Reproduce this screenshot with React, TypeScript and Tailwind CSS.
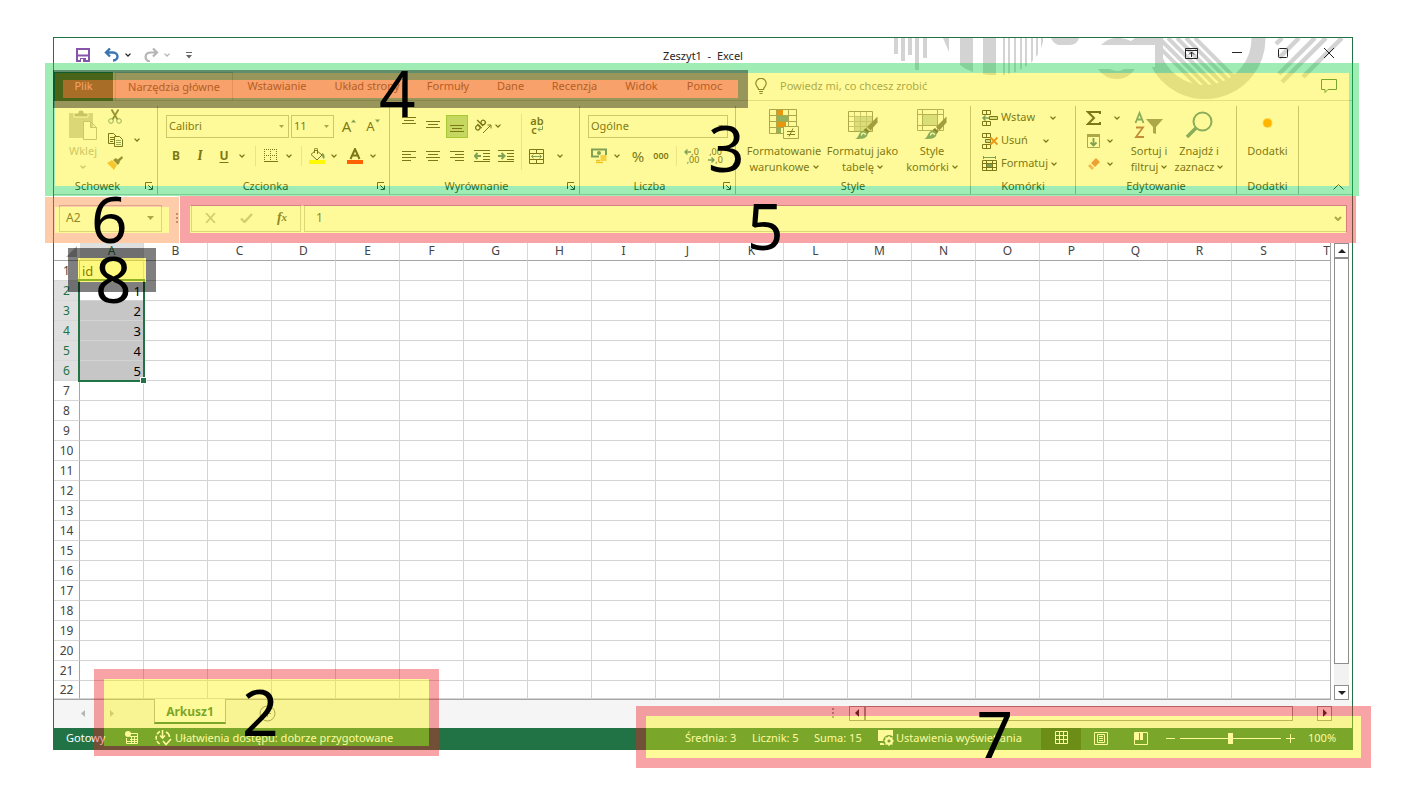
import type { ReactNode } from "react";

const COLUMNS = "ABCDEFGHIJKLMNOPQRST".split("");
const ROWS = Array.from({ length: 22 }, (_, i) => i + 1);
const VALUES: Record<number, string> = { 1: "id", 2: "1", 3: "2", 4: "3", 5: "4", 6: "5" };

function Chevron({ className = "" }: { className?: string }) {
  return (
    <svg viewBox="0 0 6 4" className={"h-[4px] w-[6px] shrink-0 " + className} fill="none" stroke="currentColor" strokeWidth="1.3">
      <path d="M.5.6 3 3 5.500.6" />
    </svg>
  );
}

function Icon({ w = 16, h = 16, children }: { w?: number; h?: number; children: ReactNode }) {
  return (
    <svg width={w} height={h} viewBox={`0 0 ${w} ${h}`} fill="none" stroke="currentColor" className="shrink-0" aria-hidden="true">
      {children}
    </svg>
  );
}

function Btn({ label, className = "", children }: { label: string; className?: string; children: ReactNode }) {
  return (
    <button type="button" aria-label={label} className={"flex shrink-0 items-center justify-center " + className}>
      {children}
    </button>
  );
}

function Group({ name, className, launcher, children }: { name: string; className: string; launcher?: boolean; children: ReactNode }) {
  return (
    <section aria-label={name} className={"flex shrink-0 flex-col border-r border-[#a8a8a8] " + className}>
      <div className="h-[72px]">{children}</div>
      <div className="flex h-[16px] items-center">
        <span className="grow text-center">{name}</span>
        {launcher && (
          <span className="flex w-[16px] shrink-0 justify-center">
            <button type="button" aria-label={name + " – więcej"}>
              <Icon w={8} h={8}>
                <path d="M7 .5H.5V7M3 3l4 4M7.500 3.500v4h-4" />
              </Icon>
            </button>
          </span>
        )}
      </div>
    </section>
  );
}

function Lines({ widths, y = 2, center = false }: { widths: number[]; y?: number; center?: boolean }) {
  return (
    <Icon w={14} h={14}>
      {widths.map((w, i) => {
        const x = center ? (14 - w) / 2 : 0;
        return <path key={i} d={`M${x} ${y + i * 3 + 0.5}h${w}`} />;
      })}
    </Icon>
  );
}

function Indent({ right = false }: { right?: boolean }) {
  return (
    <Icon w={16} h={14}>
      <path d="M0 1.500h16M9 4.500h7M9 7.500h7M0 12.500h16M9 10.500h7" />
      {right ? (
        <path d="M0 7h6M3.500 4 6.500 7l-3 3" stroke="#2b6a8c" strokeWidth="2" />
      ) : (
        <path d="M7 7H1M3.500 4 .8 7l2.700 3" stroke="#2b6a8c" strokeWidth="2" />
      )}
    </Icon>
  );
}

function BigButton({ icon, top, bottom, className }: { icon: ReactNode; top: string; bottom?: string; className: string }) {
  return (
    <button type="button" className={"flex shrink-0 flex-col items-center whitespace-nowrap " + className}>
      <span className="flex h-[37px] items-center justify-center">{icon}</span>
      <span className="leading-[16px]">{top}</span>
      {bottom && (
        <span className="flex items-center gap-[3px] leading-[16px]">
          {bottom}
          <Chevron />
        </span>
      )}
    </button>
  );
}

function Brush() {
  return (
    <g stroke="none">
      <path d="M29.500 7.500v6l-7 8-3.500-3.500z" fill="#666" />
      <path d="M18 19l3.500 3.500-2 2.500-4-4z" fill="#444" />
      <path d="M7 30c4-1 3-6 7-8 4-1 7 2 5 5-2 3-6 3-12 3z" fill="#3f8093" />
      <path d="M13.500 26.500c0-3 3.500-3 4-.5" fill="none" stroke="#fff" strokeWidth="1.300" />
    </g>
  );
}

function TitlePattern() {
  return (
    <svg viewBox="890 38 462 62" className="pointer-events-none absolute top-0 right-0 h-[62px] w-[462px]" aria-hidden="true">
      <defs>
        <clipPath id="disc"><circle cx="1205" cy="38" r="49" /></clipPath>
        <clipPath id="half"><path d="M1000 38h44l-4 14-10 12-14 8-16 4z" /></clipPath>
      </defs>
      <g fill="#d3d3d3">
        <path d="M894 38h4v16h-4zM901 38h4v23h-4zM908 38h4v17h-4zM915 38h4v32h-4zM923 38h4v20h-4z" />
        <path d="M943 38h6v14zM960 38h13v34q-7-2-13-7zM983 38h13v37h-7l-6-1z" />
        <g clipPath="url(#half)">
          <path d="M1003 38h2v40h-2zM1008 38h2v40h-2zM1014 38h2v40h-2zM1020 38h2v40h-2zM1025 38h2v40h-2zM1031 38h2v40h-2zM1036 38h2v40h-2zM1041 38h2v40h-2z" />
        </g>
        <path d="M1051 38h28q-2 7-9 7h-12q-5-2-7-7zM1041 38h2v5zM1101 45q12-12 30-4l4-3h20v7zM1098 69h12q8 4 14 0h11q-7 10-18 10-12 0-19-10z" />
      </g>
      <path d="M1258.500 38A53.500 53.500 0 0 1 1156 60V38" fill="none" stroke="#d3d3d3" strokeWidth="14" />
      <path d="M1135 45h20v22h-11V45z" fill="#fff" />
      <g stroke="#d3d3d3" strokeWidth="4" clipPath="url(#disc)">
        <path d="M1150 38l55 55M1159 38l55 55M1168 38l55 55M1177 38l55 55M1186 38l55 55M1195 38l55 55" />
      </g>
      <path d="M1276 44l6-6M1279 58l20-20M1279 74l36-36M1282 82l44-44M1303 77l39-39" stroke="#d3d3d3" strokeWidth="4.500" />
    </svg>
  );
}

function TitleBar() {
  return (
    <header className="relative flex h-[34px] items-center text-[#262626]">
      <TitlePattern />
      <div className="flex w-0 grow items-center">
        <Btn label="Zapisz" className="ml-[22px] w-[14px]">
          <Icon w={14} h={14}>
            <path d="M1 1h12v12H1z" stroke="#8654a8" strokeWidth="2" />
            <path d="M1 7.500h12" stroke="#8654a8" strokeWidth="2" />
            <path d="M4 10h6v4H4z" fill="#8654a8" stroke="none" />
            <path d="M5 11h2v3H5z" fill="#fff" stroke="none" />
          </Icon>
        </Btn>
        <Btn label="Cofnij" className="ml-[14px] w-[16px]">
          <Icon w={16} h={14}>
            <path d="M6 .5 2 4.500l4 4M2 4.500h7c6 0 6 8 0 8" stroke="#3a76b4" strokeWidth="2.400" />
          </Icon>
        </Btn>
        <Chevron className="ml-[5px]" />
        <Btn label="Ponów" className="ml-[12px] w-[16px] text-[#b5b5b5]">
          <Icon w={16} h={14}>
            <path d="m10 .5 4 4-4 4M14 4.500H8c-7 0-7 8-1 9" strokeWidth="2.200" />
          </Icon>
        </Btn>
        <Chevron className="ml-[5px] text-[#b5b5b5]" />
        <Btn label="Dostosuj pasek" className="ml-[16px] w-[6px] text-[#666]">
          <Icon w={6} h={7}>
            <path d="M0 .5h6" />
            <path d="M0 3h6L3 6.500z" fill="currentColor" stroke="none" />
          </Icon>
        </Btn>
      </div>
      <h1 className="pt-[2px] whitespace-pre">Zeszyt1  -  Excel</h1>
      <div className="relative flex w-0 grow items-center justify-end pb-[4px]">
        <Btn label="Opcje wstążki" className="w-[46px]">
          <Icon w={13} h={11}>
            <path d="M.5.5h12v10H.5zM.5 2.500h12M6.500 9V4M4 6.500 6.500 4 9 6.500" />
          </Icon>
        </Btn>
        <Btn label="Minimalizuj" className="w-[46px]">
          <Icon w={10} h={10}><path d="M0 4.500h10" /></Icon>
        </Btn>
        <Btn label="Maksymalizuj" className="w-[46px]">
          <Icon w={10} h={10}><rect x=".5" y=".5" width="9" height="9" rx="1" /></Icon>
        </Btn>
        <Btn label="Zamknij" className="w-[46px]">
          <Icon w={10} h={10}><path d="m0 0 10 10M10 0 0 10" /></Icon>
        </Btn>
      </div>
    </header>
  );
}

function Tabs() {
  const tab = "flex shrink-0 items-center justify-center whitespace-nowrap ";
  return (
    <nav className="relative flex h-[29px] border-b border-[#d2d2d2] text-[#444]">
      <button type="button" className={tab + "-mb-px w-[59px] bg-[#217346] text-white"}>Plik</button>
      <button type="button" className={tab + "-mb-px ml-[2px] w-[118px] border-x border-t border-[#d2d2d2]"}>Narzędzia główne</button>
      <button type="button" className={tab + "w-[88px]"}>Wstawianie</button>
      <button type="button" className={tab + "w-[92px]"}>Układ strony</button>
      <button type="button" className={tab + "w-[70px]"}>Formuły</button>
      <button type="button" className={tab + "w-[55px]"}>Dane</button>
      <button type="button" className={tab + "w-[73px]"}>Recenzja</button>
      <button type="button" className={tab + "w-[61px]"}>Widok</button>
      <button type="button" className={tab + "w-[65px]"}>Pomoc</button>
      <label className="ml-[18px] flex grow items-center gap-[13px]">
        <Icon w={12} h={16}>
          <path d="M3.500 11.500C3.500 9 .8 8.500.8 5.500a5.200 5.200 0 0 1 10.400 0c0 3-2.700 3.500-2.700 6zM4 13.500h4M4.500 15.500h3" strokeWidth="1.200" />
        </Icon>
        <input aria-label="Powiedz mi, co chcesz zrobić" placeholder="Powiedz mi, co chcesz zrobić" className="w-[240px] bg-transparent outline-none placeholder:text-[#777]" />
      </label>
      <Btn label="Komentarze" className="mr-[15px]">
        <Icon w={16} h={14}><path d="M.5.5h15v10H7l-3 3v-3H.5z" stroke="#217346" /></Icon>
      </Btn>
    </nav>
  );
}

function Clipboard() {
  return (
    <Group name="Schowek" launcher className="w-[104px]">
      <div className="flex">
        <button type="button" className="ml-[14px] flex w-[30px] flex-col items-center text-[#aaa]">
          <span className="flex h-[37px] items-center">
            <Icon w={28} h={30}>
              <path d="M0 3h24v25H0z" fill="#c4c4c4" stroke="none" />
              <path d="M5 7V3h4c0-4 6-4 6 0h4v4z" fill="#a5a5a5" stroke="#fff" />
              <path d="M14.500 11.500h7l6 6v12h-13zM21.500 11.500v6h6" fill="#fff" stroke="#aaa" />
            </Icon>
          </span>
          <span className="leading-[16px]">Wklej</span>
          <Chevron className="mt-[6px]" />
        </button>
        <div className="ml-[9px] flex w-[16px] flex-col items-center">
          <Btn label="Wytnij" className="h-[22px]">
            <Icon w={16} h={16}>
              <path d="m4.500.5 6 10M11.500.5l-6 10" stroke="#555" strokeWidth="1.800" />
              <circle cx="4" cy="12" r="2.300" stroke="#4b8393" /><circle cx="12" cy="12" r="2.300" stroke="#4b8393" />
            </Icon>
          </Btn>
          <Btn label="Kopiuj" className="h-[23px]">
            <Icon w={15} h={14}>
              <path d="M.5.5h5l3 3v7h-8zM2 4.500h4M2 6.500h4M2 8.500h3" />
              <path d="M6.500 3.500h5l3 3v7h-8z" fill="#fff" /><path d="M8 7.500h5M8 9.500h5M8 11.500h5" stroke="#4b8393" />
            </Icon>
          </Btn>
          <Btn label="Malarz formatów" className="h-[23px]">
            <Icon w={16} h={14}>
              <path d="M0 7l5-3 5 5-3 5z" fill="#f0a850" stroke="none" />
              <path d="m6 4 3-2 4 4-2 3zM10 4l5-4 1 2-4 4z" fill="#555" stroke="none" />
            </Icon>
          </Btn>
        </div>
        <Btn label="Opcje kopiowania" className="ml-[11px] h-[67px] w-[6px]"><Chevron /></Btn>
      </div>
    </Group>
  );
}

function Picker({ label, value, className }: { label: string; value: string; className: string }) {
  return (
    <span className={"relative flex h-[23px] shrink-0 items-center border border-[#ababab] " + className}>
      <select aria-label={label} className="w-full appearance-none bg-transparent pl-[2px] outline-none">
        <option>{value}</option>
      </select>
      <svg viewBox="0 0 5 3" className="pointer-events-none absolute right-[4px] h-[3px] w-[5px]"><path d="M0 0h5L2.500 3z" fill="#777" /></svg>
    </span>
  );
}

function FontGroup() {
  return (
    <Group name="Czcionka" launcher className="w-[232px]">
      <div className="flex h-[37px] items-center pt-[3px] pl-[8px]">
        <Picker label="Czcionka" value="Calibri" className="w-[123px]" />
        <Picker label="Rozmiar" value="11" className="ml-[2px] w-[43px]" />
        <Btn label="Zwiększ" className="ml-[7px] w-[16px]">
          <span className="text-[15px]">A</span>
          <Icon w={5} h={14}><path d="M0 3.500h5L2.500.5z" fill="#2b6a8c" stroke="none" /></Icon>
        </Btn>
        <Btn label="Zmniejsz" className="ml-[8px] w-[16px]">
          <span className="pt-[2px] text-[13px]">A</span>
          <Icon w={5} h={14}><path d="M0 .5h5L2.500 3.500z" fill="#2b6a8c" stroke="none" /></Icon>
        </Btn>
      </div>
      <div className="flex h-[26px] items-center pl-[8px]">
        <Btn label="Pogrubienie" className="w-[20px] text-xs font-bold">B</Btn>
        <Btn label="Kursywa" className="ml-[4px] w-[20px] font-serif text-sm font-semibold italic">I</Btn>
        <Btn label="Podkreślenie" className="ml-[4px] w-[20px] text-xs font-bold underline underline-offset-2">U</Btn>
        <Chevron className="ml-[5px]" />
        <span className="ml-[10px] h-[20px] w-px bg-[#dcdcdc]" />
        <Btn label="Obramowanie" className="ml-[8px] w-[14px]">
          <Icon w={14} h={14}>
            <path d="M0 .5h14M0 6.500h14M.5 0v13M6.500 0v13M12.500 0v13" strokeDasharray="1 1" /><path d="M0 12.500h14" />
          </Icon>
        </Btn>
        <Chevron className="ml-[8px]" />
        <span className="ml-[9px] h-[20px] w-px bg-[#dcdcdc]" />
        <Btn label="Kolor wypełnienia" className="ml-[7px] w-[16px]">
          <Icon w={16} h={16}>
            <path d="m2 6.500 5-4.500 6 5-5 5zM5.500 5V1.500a1.500 1.500 0 0 1 3 0V6" />
            <path d="M13 5c3 1 3 4 2 6-2-1-2-3-2-6z" fill="#2b6a8c" stroke="none" />
            <path d="M0 12h16v4H0z" fill="#ff0" stroke="none" />
          </Icon>
        </Btn>
        <Chevron className="ml-[6px]" />
        <Btn label="Kolor czcionki" className="ml-[10px] w-[16px]">
          <Icon w={16} h={16}>
            <path d="M3.500 11 8 1l4.500 10M5 7.500h6" strokeWidth="2" />
            <path d="M0 12h16v4H0z" fill="#ff0000" stroke="none" />
          </Icon>
        </Btn>
        <Chevron className="ml-[7px]" />
      </div>
    </Group>
  );
}

function AlignGroup() {
  return (
    <Group name="Wyrównanie" launcher className="w-[190px]">
      <div className="flex">
        <div className="w-[131px] pl-[8px]">
          <div className="flex h-[37px] items-center gap-[2px] pt-[3px]">
            <Btn label="Do góry" className="h-[22px] w-[22px] pb-[8px]"><Lines widths={[14, 10, 14]} center /></Btn>
            <Btn label="Do środka" className="h-[22px] w-[22px] pb-[2px]"><Lines widths={[14, 10, 14]} y={3} center /></Btn>
            <Btn label="Do dołu" className="h-[23px] w-[22px] border border-[#6dae58] bg-[#9fc49f] pt-[6px]"><Lines widths={[14, 10, 14]} y={3} center /></Btn>
            <Btn label="Orientacja" className="ml-[4px] w-[18px]">
              <Icon w={17} h={16}>
                <g transform="rotate(-45 6 8)" strokeWidth="1.300">
                  <circle cx="2.500" cy="7" r="2.200" /><path d="M5 4v6M7.500 1v8.500" /><circle cx="10" cy="7" r="2.200" />
                </g>
                <path d="M8 15l8-8M12.500 7H16v3.500" />
              </Icon>
            </Btn>
            <Chevron className="ml-[1px]" />
          </div>
          <div className="flex h-[26px] items-center gap-[2px]">
            <Btn label="Do lewej" className="h-[22px] w-[22px]"><Lines widths={[14, 9, 14, 9]} /></Btn>
            <Btn label="Wyśrodkuj" className="h-[22px] w-[22px]"><Lines widths={[14, 10, 14, 10]} center /></Btn>
            <Btn label="Do prawej" className="h-[22px] w-[22px]"><span className="-scale-x-100"><Lines widths={[14, 9, 14, 9]} /></span></Btn>
            <Btn label="Zmniejsz wcięcie" className="ml-[1px] h-[22px] w-[22px]"><Indent /></Btn>
            <Btn label="Zwiększ wcięcie" className="h-[22px] w-[22px]"><Indent right /></Btn>
          </div>
        </div>
        <div className="my-[8px] h-[56px] w-px bg-[#dcdcdc]" />
        <div className="pl-[7px]">
          <Btn label="Zawijaj tekst" className="h-[37px] w-[16px] flex-col text-[11px] leading-[9px] font-semibold">
            <span>ab</span>
            <span className="flex items-center">
              c
              <Icon w={6} h={6}><path d="M5.500 0v3.500H1M3 1.500l-2 2 2 2" stroke="#2b6a8c" /></Icon>
            </span>
          </Btn>
          <div className="flex h-[26px] items-center">
            <Btn label="Scal i wyśrodkuj" className="w-[15px]">
              <Icon w={15} h={15}>
                <path d="M.5.5h14v14H.5zM.5 4.500h14M.5 10.500h14M7.500.5v4M7.500 10.500v4" />
                <path d="M2.500 7.500h10M4.500 5.500l-2 2 2 2M10.500 5.500l2 2-2 2" stroke="#2b6a8c" />
              </Icon>
            </Btn>
            <Chevron className="ml-[13px]" />
          </div>
        </div>
      </div>
    </Group>
  );
}

function NumberGroup() {
  return (
    <Group name="Liczba" launcher className="w-[156px]">
      <div className="flex h-[37px] items-center pt-[3px] pl-[8px]">
        <Picker label="Format liczb" value="Ogólne" className="w-[140px]" />
      </div>
      <div className="flex h-[26px] items-center pl-[11px]">
        <Btn label="Format walutowy" className="w-[16px]">
          <Icon w={16} h={16}>
            <path d="M1 1.500h14v7H1z" stroke="#2b6a8c" strokeWidth="2" /><circle cx="8" cy="5" r="2" fill="#2b6a8c" stroke="none" />
            <path d="M8 7h8v9H5v-5h3z" fill="#fff" stroke="none" />
            <path d="M9.500 8h6M9.500 10h6M9.500 12h6M5 12.500h4M5 14.500h7" stroke="#e9a23b" strokeWidth="1.500" />
          </Icon>
        </Btn>
        <Chevron className="ml-[7px]" />
        <Btn label="Procent" className="ml-[9px] w-[18px] text-[15px]">%</Btn>
        <Btn label="Zapis dziesiętny" className="ml-[4px] w-[20px] text-[9px] font-semibold">000</Btn>
        <span className="ml-[5px] h-[20px] w-px bg-[#dcdcdc]" />
        <Btn label="Więcej miejsc" className="ml-[6px] w-[17px] flex-col text-[9px] leading-[8px]">
          <span className="flex items-center">
            <Icon w={7} h={6}><path d="M7 3H1M3.500.5 1 3l2.500 2.500" stroke="#2b6a8c" strokeWidth="1.400" /></Icon>,0
          </span>
          <span className="pl-[3px]">,00</span>
        </Btn>
        <Btn label="Mniej miejsc" className="ml-[7px] w-[17px] flex-col text-[9px] leading-[8px]">
          <span>,00</span>
          <span className="flex items-center">
            <Icon w={7} h={6}><path d="M0 3h6M3.500.5 6 3 3.500 5.500" stroke="#2b6a8c" strokeWidth="1.400" /></Icon>,0
          </span>
        </Btn>
      </div>
    </Group>
  );
}

function StylesGroup() {
  return (
    <Group name="Style" className="w-[235px]">
      <div className="flex pl-[9px]">
        <BigButton
          className="w-[78px]"
          top="Formatowanie"
          bottom="warunkowe"
          icon={
            <Icon w={30} h={31}>
              <path d="M.5.5h27v24H.5zM.5 6.500h27M.5 12.500h27M.5 18.500h27M7.500.5v24M19.500.5v24" stroke="#777" />
              <path d="M8 1h6v5H8zM8 13h9v5H8z" fill="#d65a16" stroke="none" /><path d="M8 7h11v5H8zM8 19h4v5H8z" fill="#47869a" stroke="none" />
              <path d="M14.500 17.500h15v12h-15z" fill="#fff" stroke="#777" />
              <path d="M18 22.500h8M18 25.500h8M24 19.500l-4 8" stroke="#333" />
            </Icon>
          }
        />
        <BigButton
          className="w-[79px]"
          top="Formatuj jako"
          bottom="tabelę"
          icon={
            <Icon w={30} h={31}>
              <path d="M7 8h17v14H7z" fill="#c2d0c5" stroke="none" />
              <path d="M.5 7.500h24M.5 12.500h24M.5 17.500h24M6.500 2.500v20M12.500 2.500v20M18.500 2.500v20" stroke="#aaa" />
              <path d="M.5 2.500h24v20H.5z" stroke="#777" />
              <Brush />
            </Icon>
          }
        />
        <BigButton
          className="w-[60px]"
          top="Style"
          bottom="komórki"
          icon={
            <Icon w={30} h={31}>
              <path d="M.5.5h26v21H.5zM.5 5.500h26M.5 16.500h26M5.500.5v21M20.500.5v21" stroke="#888" />
              <path d="M6 6h14v10H6z" fill="#c2d0c5" stroke="none" />
              <Brush />
            </Icon>
          }
        />
      </div>
    </Group>
  );
}

function CellsGroup() {
  const row = "flex h-[23px] items-center gap-[3px]";
  return (
    <Group name="Komórki" className="w-[105px]">
      <div className="pl-[11px]">
        <button type="button" className={row}>
          <Icon w={16} h={16}>
            <path d="M.5.5h8v4h-8zM4.500.5v4M.5 11.500h8v4h-8zM4.500 11.500v4" />
            <path d="M7.500 6.500h8v3h-8z" fill="#bcd0c8" />
            <path d="M7 8H1M3.500 5.500 1 8l2.500 2.500" stroke="#2b6a8c" strokeWidth="1.500" />
          </Icon>
          Wstaw
          <Chevron className="ml-[12px]" />
        </button>
        <button type="button" className={row}>
          <Icon w={16} h={16}>
            <path d="M.5.5h8v4h-8zM4.500.5v4M.5 11.500h8v4h-8zM4.500 11.500v4" />
            <path d="M3.500 6.500h5v3h-5z" fill="#bcd0c8" />
            <path d="m8.500 4.500 7 7M15.500 4.500l-7 7" stroke="#e0571c" strokeWidth="1.800" />
          </Icon>
          Usuń
          <Chevron className="ml-[12px]" />
        </button>
        <button type="button" className={row}>
          <Icon w={16} h={16}>
            <path d="M.5 4.500h14v10H.5zM.5 7.500h14M.5 11.500h14M4.500 4.500v10M10.500 4.500v10" /><path d="M5 8h5v3H5z" fill="#2b6a8c" stroke="none" />
            <path d="M1 1.500h13M1.500 0v3M13.500 0v3" stroke="#2b6a8c" />
          </Icon>
          Formatuj
          <Chevron />
        </button>
      </div>
    </Group>
  );
}

function EditGroup() {
  return (
    <Group name="Edytowanie" className="w-[161px]">
      <div className="flex">
        <div className="ml-[10px] w-[38px]">
          <Btn label="Suma" className="h-[23px] gap-[12px]">
            <Icon w={16} h={14}><path d="M14 3V1H2l6 6-6 6h12v-2" strokeWidth="2" /></Icon>
            <Chevron />
          </Btn>
          <Btn label="Wypełnij" className="h-[23px] gap-[6px]">
            <Icon w={15} h={16}><path d="M1.500 1.500h12v13h-12z" stroke="#777" /><path d="M1 1h13v3H1z" fill="#777" stroke="none" /><path d="M7.500 5v8M4.500 9.500l3 3 3-3" stroke="#2b6a8c" strokeWidth="1.800" /></Icon>
            <Chevron />
          </Btn>
          <Btn label="Wyczyść" className="h-[23px] gap-[6px]">
            <Icon w={15} h={14}><path d="M5 6 10 1l4 4-5 5z" fill="#e36a55" stroke="none" /><path d="m4 7 4 4-2 2-4-4z" fill="#eb9280" stroke="none" /></Icon>
            <Chevron />
          </Btn>
        </div>
        <BigButton
          className="w-[50px]"
          top="Sortuj i"
          bottom="filtruj"
          icon={
            <Icon w={30} h={28}>
              <path d="M1.500 12 5.500 2l4 10M3 8.500h5" stroke="#3b7e93" strokeWidth="1.800" />
              <path d="M2 16.500h7L2 26h8" stroke="#9d4a5d" strokeWidth="1.800" />
              <path d="M12 8h17l-7 8v7l-3-1v-6z" fill="#777" stroke="none" />
            </Icon>
          }
        />
        <BigButton
          className="w-[50px]"
          top="Znajdź i"
          bottom="zaznacz"
          icon={
            <Icon w={28} h={28}>
              <circle cx="17.500" cy="10.500" r="9" stroke="#3b7e93" strokeWidth="2" /><path d="m11 17-9 9" stroke="#3b7e93" strokeWidth="3.500" />
            </Icon>
          }
        />
      </div>
    </Group>
  );
}

function Ribbon() {
  return (
    <div className="flex h-[94px] border-b border-[#c8c8c8] pt-[5px] text-[#262626]">
      <Clipboard />
      <FontGroup />
      <AlignGroup />
      <NumberGroup />
      <StylesGroup />
      <CellsGroup />
      <EditGroup />
      <Group name="Dodatki" className="w-[62px]">
        <BigButton className="w-full" top="Dodatki" icon={<Icon w={12} h={16}><circle cx="5.500" cy="6" r="5" fill="#ff8a00" fillOpacity=".5" stroke="none" /><circle cx="5.500" cy="6" r="4" fill="#ff8a00" stroke="none" /></Icon>} />
      </Group>
      <div className="flex grow items-end justify-end pr-[8px] pb-[4px]">
        <Btn label="Zwiń wstążkę">
          <Icon w={11} h={6}><path d="M.5 5.500l5-5 5 5" /></Icon>
        </Btn>
      </div>
    </div>
  );
}

function FormulaBar() {
  return (
    <div className="flex h-[48px] items-center pr-[5px] pb-[2px] pl-[5px] text-[#444]">
      <div className="flex h-[27px] w-[103px] shrink-0 items-center border border-[#c4c4c4] pr-[7px]">
        <input aria-label="Pole nazwy" defaultValue="A2" className="w-0 grow bg-transparent pl-[6px] text-xs outline-none" />
        <svg viewBox="0 0 7 4" className="h-[4px] w-[7px]"><path d="M0 0h7L3.500 4z" fill="#777" /></svg>
      </div>
      <div className="flex w-[29px] shrink-0 justify-center">
        <Icon w={2} h={12}><path d="M1 1v2M1 5v2M1 9v2" stroke="#999" strokeWidth="2" /></Icon>
      </div>
      <div className="flex h-[27px] w-[110px] shrink-0 items-center border border-[#c4c4c4]">
        <Btn label="Anuluj" className="w-[36px] text-[#b5b5b5]"><Icon w={11} h={10}><path d="m1 0 9 10M10 0 1 10" strokeWidth="1.800" /></Icon></Btn>
        <Btn label="Wpis" className="w-[36px] text-[#b5b5b5]"><Icon w={13} h={10}><path d="M1 5.500 4.500 9 12 1" strokeWidth="2.400" /></Icon></Btn>
        <Btn label="Wstaw funkcję" className="w-[36px] items-baseline font-['Liberation_Serif',serif] text-sm font-bold italic">f<span className="text-[11px]">x</span></Btn>
      </div>
      <div className="ml-[3px] flex h-[27px] grow items-center border border-[#c4c4c4] pr-[4px]">
        <input aria-label="Pasek formuły" defaultValue="1" className="w-0 grow bg-transparent pl-[11px] text-xs outline-none" />
        <svg viewBox="0 0 8 5" className="h-[5px] w-[8px]"><path d="M1 1l3 3 3-3" fill="none" stroke="#777" strokeWidth="2" /></svg>
      </div>
    </div>
  );
}

function Sheet() {
  return (
    <div className="flex text-xs">
      <div className="w-0 grow">
        <table className="w-full table-fixed border-separate border-spacing-0 border-r border-b border-[#a6a6a6]">
          <colgroup>
            <col className="w-[26px]" />
            {COLUMNS.map((c) => <col key={c} className={c === "T" ? "" : "w-[64px]"} />)}
          </colgroup>
          <thead>
            <tr className="h-[18px]">
              <td className="border-b border-[#a6a6a6] p-0">
                <svg viewBox="0 0 12 12" className="ml-auto mr-[3px] h-[11px] w-[11px]"><path d="M12 0v12H0z" fill="#b5b5b5" /></svg>
              </td>
              {COLUMNS.map((c) => (
                <th
                  key={c}
                  scope="col"
                  className={
                    "border-r border-b border-[#a6a6a6] border-r-[#d8d8d8] p-0 pb-[2px] leading-[14px] font-normal last:border-r-0 last:pr-0 last:text-right " +
                    (c === "A" ? "bg-[#dfdfdf] text-[#217346]" : "text-[#444]")
                  }
                >
                  {c}
                </th>
              ))}
            </tr>
          </thead>
          <tbody>
            {ROWS.map((r) => {
              const picked = r > 1 && r < 7;
              return (
                <tr key={r} className={r === 22 ? "h-[18px]" : "h-[20px]"}>
                  <th
                    scope="row"
                    className={
                      "border-r border-b border-r-[#a6a6a6] border-b-[#d8d8d8] p-0 leading-[17px] font-normal " +
                      (picked ? "bg-[#dfdfdf] text-[#217346]" : "text-[#444]")
                    }
                  >
                    {r}
                  </th>
                  {COLUMNS.map((c) => (
                    <td
                      key={c}
                      className={
                        "relative border-b border-[#d3d3d3] p-0 leading-[18px] " +
                        (c === "T" ? "" : "border-r ") +
                        (c === "A" && r > 2 && picked ? "bg-[#c6c6c6] " : "") +
                        (r > 1 ? "pr-[2px] text-right text-[13px]" : "pl-[2px] text-[13px]")
                      }
                    >
                      {c === "A" ? VALUES[r] : ""}
                      {c === "A" && r === 2 && (
                        <span className="pointer-events-none absolute -top-[2px] -left-[2px] z-10 h-[103px] w-[67px] border-2 border-[#217346]">
                          <span className="absolute -right-[4px] -bottom-[4px] h-[7px] w-[7px] border border-white bg-[#217346]" />
                        </span>
                      )}
                    </td>
                  ))}
                </tr>
              );
            })}
          </tbody>
        </table>
      </div>
      <div className="mr-[3px] ml-[3px] flex w-[15px] flex-col bg-[#f2f2f2]">
        <Btn label="W górę" className="h-[15px] border border-[#8e8e8e] bg-white"><Icon w={8} h={4}><path d="M0 4h8L4 0z" fill="#222" stroke="none" /></Icon></Btn>
        <div className="h-[406px] border border-[#8e8e8e] bg-white" />
        <Btn label="W dół" className="mt-auto h-[15px] border border-[#8e8e8e] bg-white"><Icon w={8} h={4}><path d="M0 0h8L4 4z" fill="#222" stroke="none" /></Icon></Btn>
      </div>
    </div>
  );
}

function SheetTabs() {
  return (
    <div className="flex h-[28px] bg-[#f5f5f5] pb-[2px]">
      <div className="flex w-[100px] items-center pl-[26px] text-[#b5b5b5]">
        <Btn label="Poprzedni arkusz" className="w-[6px]"><Icon w={4} h={7}><path d="M4 0v7L0 3.500z" fill="currentColor" stroke="none" /></Icon></Btn>
        <Btn label="Następny arkusz" className="ml-[23px] w-[6px]"><Icon w={4} h={7}><path d="M0 0v7l4-3.500z" fill="currentColor" stroke="none" /></Icon></Btn>
      </div>
      <button type="button" className="-mt-px h-[25px] w-[72px] border-x border-b-2 border-x-[#a6a6a6] border-b-[#217346] bg-white pt-[3px] text-xs font-bold text-[#217346]">Arkusz1</button>
      <Btn label="Nowy arkusz" className="ml-[33px] text-[#777]"><Icon w={17} h={17}><circle cx="8.500" cy="8.500" r="7.500" /><path d="M5 8.500h7M8.500 5v7" /></Icon></Btn>
      <div className="ml-auto flex items-center pr-[20px]">
        <Icon w={2} h={12}><path d="M1 1v2M1 5v2M1 9v2" stroke="#999" strokeWidth="2" /></Icon>
        <Btn label="W lewo" className="ml-[15px] h-[15px] w-[16px] border border-[#8e8e8e] bg-white"><Icon w={4} h={8}><path d="M4 0v8L0 4z" fill="#222" stroke="none" /></Icon></Btn>
        <div className="h-[15px] w-[428px] border border-[#8e8e8e] bg-white" />
        <Btn label="W prawo" className="ml-[24px] h-[15px] w-[15px] border border-[#8e8e8e] bg-white"><Icon w={4} h={8}><path d="M0 0v8l4-4z" fill="#222" stroke="none" /></Icon></Btn>
      </div>
    </div>
  );
}

function StatusBar() {
  return (
    <footer className="-mx-px flex h-[22px] items-center bg-[#217346] pb-[2px] pl-[13px] whitespace-nowrap text-white">
      <span className="w-[59px]">Gotowy</span>
      <Btn label="Nagraj makro" className="w-[14px]">
        <Icon w={14} h={14}>
          <path d="M4 2.500h8.500v10h-11V7M5 5.500h7M5 8.500h7M2 10.500h10M6.500 5v7M9.500 5v7" /><circle cx="3" cy="3" r="3" fill="#fff" stroke="none" />
        </Icon>
      </Btn>
      <button type="button" className="ml-[16px] flex items-center gap-[3px]">
        <Icon w={17} h={16}>
          <path d="M5 1.500a7 7 0 0 0 0 12.500" strokeWidth="1.600" strokeDasharray="4 1.500" />
          <path d="M7.500 0v8M5 5.500l2.500 2.500L10 5.500M11 2c2 1 3.500 3 3.500 5M8 11l3 3.500 5-5.500" strokeWidth="1.600" />
        </Icon>
        Ułatwienia dostępu: dobrze przygotowane
      </button>
      <div className="ml-auto flex items-center">
        <span className="w-[67px]">Średnia: 3</span>
        <span className="w-[62px]">Licznik: 5</span>
        <span className="w-[64px]">Suma: 15</span>
        <button type="button" className="flex w-[163px] items-center gap-[2px]">
          <Icon w={16} h={16}>
            <path d="M0 0h15v7H7v4H0zM2 13h5v2H2z" fill="#fff" stroke="none" />
            <circle cx="11" cy="11" r="6" fill="#217346" stroke="none" />
            <circle cx="11" cy="11" r="3" strokeWidth="2" /><path d="M11 6v10M6 11h10M7.500 7.500l7 7M14.500 7.500l-7 7" strokeWidth="1.200" /><circle cx="11" cy="11" r="1.500" fill="#217346" stroke="none" />
          </Icon>
          Ustawienia wyświetlania
        </button>
        <Btn label="Normalny" className="-mb-[2px] h-[22px] w-[40px] bg-[#0a4a24] pb-[3px]"><Icon w={13} h={13}><path d="M.5.5h12v12H.5zM.5 4.500h12M.5 8.500h12M4.500.5v12M8.500.5v12" /></Icon></Btn>
        <Btn label="Układ strony" className="w-[40px]"><Icon w={14} h={13}><path d="M.5.5h13v12H.5zM3.500 2.500h7v8h-7zM5 4.500h4M5 6.500h4M5 8.500h4" /></Icon></Btn>
        <Btn label="Podział stron" className="w-[40px]"><Icon w={14} h={13}><path d="M.5.5h13v12H.5z" /><path d="M1 1h4v7H1zM6 1h3v7H6z" fill="#fff" stroke="none" /></Icon></Btn>
        <Btn label="Pomniejsz" className="ml-[5px] w-[9px]"><Icon w={9} h={9}><path d="M0 4.500h9" /></Icon></Btn>
        <input
          type="range"
          aria-label="Powiększenie"
          className="mx-[5px] h-[12px] w-[101px] appearance-none bg-transparent [&::-webkit-slider-runnable-track]:h-px [&::-webkit-slider-runnable-track]:bg-white [&::-webkit-slider-thumb]:-mt-[5px] [&::-webkit-slider-thumb]:h-[11px] [&::-webkit-slider-thumb]:w-[5px] [&::-webkit-slider-thumb]:appearance-none [&::-webkit-slider-thumb]:bg-white"
        />
        <Btn label="Powiększ" className="w-[9px]"><Icon w={9} h={9}><path d="M0 4.500h9M4.500 0v9" /></Icon></Btn>
        <span className="w-[58px] pl-[13px]">100%</span>
      </div>
    </footer>
  );
}

function Mark({ n, className }: { n: string; className: string }) {
  return <span className={"absolute text-[64px] leading-none text-black " + className}>{n}</span>;
}

function Annotations() {
  return (
    <div className="pointer-events-none absolute inset-0 z-20">
      <div className="absolute top-[63px] right-[57px] left-[45px] h-[133px] border-[10px] border-[#0ed145]/40">
        <div className="h-full bg-[#fff200]/40" />
      </div>
      <div className="absolute top-[70px] left-[53px] h-[38px] w-[695px] border-[10px] border-black/40">
        <div className="h-full bg-[#ed1c24]/40" />
      </div>
      <div className="absolute top-[196px] right-[60px] left-[180px] h-[47px] border-[10px] border-[#ed1c24]/40">
        <div className="h-full bg-[#fff200]/40" />
      </div>
      <div className="absolute top-[197px] left-[45px] h-[46px] w-[134px] border-[10px] border-[#ff7f27]/40">
        <div className="h-full bg-[#fff200]/40" />
      </div>
      <div className="absolute top-[248px] left-[68px] h-[44px] w-[88px] border-[10px] border-black/50">
        <div className="h-full bg-[#fff200]/50" />
      </div>
      <div className="absolute top-[669px] left-[94px] h-[87px] w-[345px] border-[10px] border-[#ed1c24]/40">
        <div className="h-full bg-[#fff200]/40" />
      </div>
      <div className="absolute top-[706px] right-[45px] h-[62px] w-[735px] border-[10px] border-[#ed1c24]/40">
        <div className="h-full bg-[#fff200]/40" />
      </div>
      <Mark n="2" className="top-[680px] left-[242px]" />
      <Mark n="3" className="top-[116px] left-[708px]" />
      <Mark n="4" className="top-[61px] left-[379px]" />
      <Mark n="5" className="top-[194px] left-[747px]" />
      <Mark n="6" className="top-[187px] left-[91px]" />
      <Mark n="7" className="top-[702px] right-[403px]" />
      <Mark n="8" className="top-[247px] left-[95px]" />
    </div>
  );
}

export default function App() {
  return (
    <div className="relative min-h-screen bg-white pt-[37px] pr-[63px] pb-[45px] pl-[53px] font-['Noto_Sans','Open_Sans',sans-serif] text-[11px]">
      <main className="border-x border-t border-[#217346] bg-white">
        <TitleBar />
        <Tabs />
        <Ribbon />
        <FormulaBar />
        <Sheet />
        <SheetTabs />
        <StatusBar />
      </main>
      <Annotations />
    </div>
  );
}
